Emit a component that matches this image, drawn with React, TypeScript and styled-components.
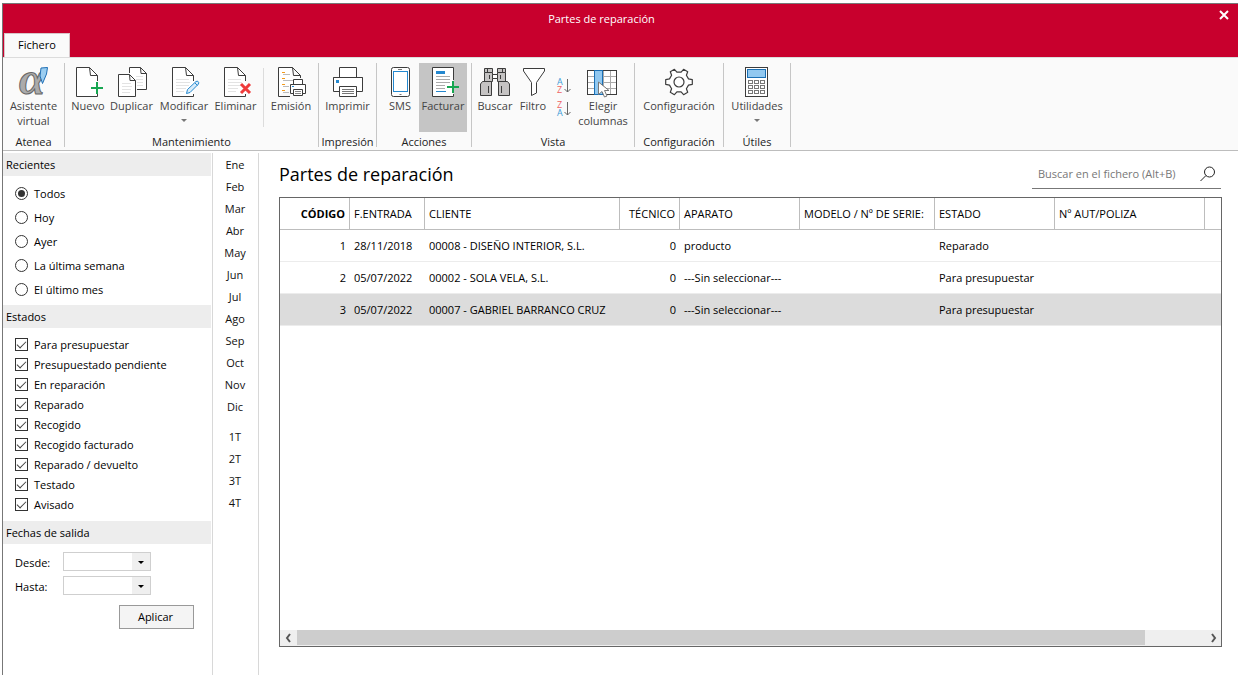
import React, { useState } from "react";
import styled, { createGlobalStyle } from "styled-components";

const GlobalStyle = createGlobalStyle`
  *, *::before, *::after { box-sizing: border-box; }
  body {
    margin: 0;
    background: #fff;
    color: #000;
    font: 11px/15px "Open Sans", "Noto Sans", sans-serif;
  }
  button, input, select { font: inherit; color: inherit; }
  svg { overflow: visible; }
`;

const Window = styled.div`
  display: flex;
  flex-direction: column;
  min-height: calc(100vh - 3px);
  margin: 3px 0 0 2px;
  border-left: 1px solid #777;
`;

const TitleBar = styled.header`
  position: relative;
  display: flex;
  flex-direction: column;
  height: 54px;
  border-top: 1px solid #777;
  background: #c8002d;
`;

const WindowTitle = styled.div`
  padding: 7px 38px 7px 0;
  text-align: center;
  color: #fff;
`;

const CloseButton = styled.button`
  position: absolute;
  top: 1px;
  right: 4px;
  display: flex;
  align-items: center;
  justify-content: center;
  width: 20px;
  height: 20px;
  padding: 0;
  border: 0;
  background: none;
`;

const Tab = styled.button`
  width: 66px;
  height: 25px;
  margin-left: 1px;
  margin-top: auto;
  padding: 0 0 2px;
  border: 1px solid #d8c4c8;
  border-bottom: 0;
  background: #fafafa;
`;

const Ribbon = styled.nav`
  display: flex;
  height: 94px;
  padding: 5px 0 3px;
  border-top: 1px solid #dcdcdc;
  border-bottom: 1px solid #bdbdbd;
  background: #fafafa;
`;

const Group = styled.section`
  display: flex;
  flex-direction: column;
  justify-content: space-between;
  padding: 0 4px;
  border-right: 1px solid #c6c6c6;
`;

const GroupRow = styled.div`
  display: flex;
  height: 69px;
`;

const GroupLabel = styled.div`
  display: flex;
  justify-content: center;
  width: 0;
  min-width: 100%;
  height: 13px;
  white-space: nowrap;
  color: #222;
`;

const Divider = styled.div`
  width: 1px;
  margin: 5px 4px;
  background: #dcdcdc;
`;

const RibbonButton = styled.button<{ $width: number; $active?: boolean }>`
  display: flex;
  flex-direction: column;
  align-items: center;
  width: ${(p) => p.$width}px;
  padding: 3px 0 0;
  border: 0;
  background: ${(p) => (p.$active ? "#c5c5c5" : "none")};
  color: #444;
  white-space: nowrap;
  svg { flex: none; }
`;

const Caret = styled.span`
  margin-top: 6px;
  border: 3px solid transparent;
  border-top-color: #777;
  border-bottom: 0;
`;

const SortStack = styled.div`
  display: flex;
  flex-direction: column;
  gap: 7px;
  width: 24px;
  padding-top: 15px;
`;

const SortButton = styled.button`
  display: flex;
  justify-content: center;
  padding: 0;
  border: 0;
  background: none;
`;

const Body = styled.div`
  display: flex;
  flex: 1;
  padding-top: 2px;
`;

const Sidebar = styled.aside`
  width: 210px;
  flex: none;
  padding-right: 1px;
  border-right: 1px solid #d8d8d8;
`;

const PanelTitle = styled.h2`
  margin: 0;
  padding: 4px 3px;
  background: #ededed;
  font-size: 11px;
  font-weight: 400;
  line-height: 15px;
`;

const OptionList = styled.div<{ $row: number; $top: number; $bottom: number }>`
  display: grid;
  grid-auto-rows: ${(p) => p.$row}px;
  padding: ${(p) => p.$top}px 12px ${(p) => p.$bottom}px;
  label {
    display: flex;
    align-items: center;
    gap: 6px;
  }
`;

const Radio = styled.input`
  appearance: none;
  display: grid;
  place-items: center;
  width: 13px;
  height: 13px;
  margin: 0;
  border: 1px solid #333;
  border-radius: 50%;
  &:checked::after {
    content: "";
    width: 7px;
    height: 7px;
    border-radius: 50%;
    background: #333;
  }
`;

const Check = styled.input`
  appearance: none;
  display: flex;
  justify-content: center;
  width: 13px;
  height: 13px;
  margin: 0;
  border: 1px solid #333;
  &:checked::after {
    content: "";
    width: 9px;
    height: 5px;
    margin-top: 2px;
    border: solid #444;
    border-width: 0 0 1px 1px;
    transform: rotate(-45deg);
  }
`;

const DateForm = styled.form`
  display: grid;
  grid-template-columns: 48px 88px;
  row-gap: 4px;
  padding: 8px 12px;
  label { padding-top: 3px; }
`;

const SelectBox = styled.div`
  position: relative;
  height: 20px;
  &::after {
    content: "";
    position: absolute;
    right: 7px;
    top: 9px;
    border: 3px solid transparent;
    border-top-color: #000;
    border-bottom: 0;
    pointer-events: none;
  }
`;

const Select = styled.select`
  appearance: none;
  width: 100%;
  height: 19px;
  padding: 0 20px 0 4px;
  border: 1px solid #cfcfcf;
  border-radius: 0;
  background: linear-gradient(to right, #fff calc(100% - 18px), #efefef calc(100% - 18px));
`;

const ApplyButton = styled.button`
  grid-column: 1 / -1;
  width: 75px;
  height: 24px;
  margin: 5px 0 0 104px;
  padding: 0 2px 2px 0;
  border: 1px solid #999;
  background: #f4f4f4;
`;

const Periods = styled.nav`
  display: flex;
  flex-direction: column;
  flex: none;
  width: 46px;
  border-right: 1px solid #d8d8d8;
`;

const Period = styled.button<{ $first?: boolean }>`
  height: 22px;
  margin-top: ${(p) => (p.$first ? 8 : 0)}px;
  padding: 0 1px 0 0;
  border: 0;
  background: none;
  color: #111;
`;

const Main = styled.main`
  display: flex;
  flex-direction: column;
  flex: 1;
  min-width: 0;
  padding: 6px 16px 28px 20px;
`;

const MainHeader = styled.div`
  display: flex;
  justify-content: space-between;
  align-items: flex-start;
  height: 38px;
`;

const Heading = styled.h1`
  margin: 0;
  font-size: 18px;
  font-weight: 400;
  line-height: 30px;
`;

const Search = styled.div`
  display: flex;
  width: 189px;
  height: 30px;
  margin-right: 1px;
  border-bottom: 1px solid #777;
  input {
    flex: 1;
    min-width: 0;
    padding: 0 6px;
    border: 0;
    outline: 0;
    background: none;
  }
  input::placeholder { color: #777; opacity: 1; }
  button {
    display: flex;
    align-items: center;
    padding: 0 5px;
    border: 0;
    background: none;
  }
`;

const TableFrame = styled.div`
  display: flex;
  flex-direction: column;
  flex: 1;
  border: 1px solid #666;
`;

const Table = styled.table`
  width: 100%;
  table-layout: fixed;
  border-spacing: 0;
  th, td {
    height: 32px;
    padding: 0 4px;
    overflow: hidden;
    text-align: left;
    font-weight: 400;
    white-space: nowrap;
    border-bottom: 1px solid #ececec;
  }
  thead th, thead td {
    border-bottom-color: #bdbdbd;
  }
  thead th { border-right: 1px solid #bdbdbd; }
`;

const HeadCell = styled.th<{ $width: number; $right?: boolean; $bold?: boolean }>`
  width: ${(p) => p.$width}px;
  && {
    text-align: ${(p) => (p.$right ? "right" : "left")};
    font-weight: ${(p) => (p.$bold ? 700 : 400)};
  }
`;

const Row = styled.tr<{ $selected: boolean }>`
  background: ${(p) => (p.$selected ? "#dcdcdc" : "#fff")};
`;

const Cell = styled.td<{ $right?: boolean }>`
  && { text-align: ${(p) => (p.$right ? "right" : "left")}; }
`;

const ScrollBar = styled.div`
  display: flex;
  height: 16px;
  margin-top: auto;
  background: #efefef;
  button {
    display: flex;
    align-items: center;
    justify-content: center;
    width: 17px;
    padding: 0;
    border: 0;
    background: none;
  }
`;

const Track = styled.div`
  flex: 1;
`;

const Thumb = styled.div`
  width: 93.5%;
  height: 15px;
  background: #cdcdcd;
`;

const INK = "#3c3c3c";
const GREEN = "#17a651";
const BLUE = "#2488cf";

type IconProps = { children: React.ReactNode };

const Icon = ({ children }: IconProps) => (
  <svg width="32" height="32" viewBox="0 0 32 32" fill="none" stroke={INK} aria-hidden="true">
    {children}
  </svg>
);

/* Sheet with a folded corner, open on the right where a mark sits over it */
const Sheet = ({ lines }: { lines?: boolean }) => (
  <>
    <path d="M25.5 14V9.5L17.5 1.5H4.5V30.5H25.5V28" fill="#fff" stroke="none" />
    <path d="M25.5 15V9.5L17.5 1.5H4.5V30.5H25.5V28M17.5 1.5L18.5 9.5H25.5" />
    {lines && <path d="M8 13.5H21M8 16.5H22M8 19.5H21M8 22.5H18M8 25.5H16" stroke="#e3e3e3" />}
  </>
);

const AssistantIcon = () => (
  <Icon>
    <text x="1" y="28" fontFamily="Liberation Serif, serif" fontSize="47" fontWeight="700" fontStyle="italic" fill="#ababab" stroke="#666" strokeWidth="1">
      α
    </text>
    <path d="M23 2L29.5 1.5L28.5 8L24.5 17.5L22 10Z" fill="#9bcdf0" stroke="#1f6fb5" />
  </Icon>
);

const NewIcon = () => (
  <Icon>
    <Sheet />
    <path d="M19 22H31M25 16V28" stroke={GREEN} strokeWidth="2" />
  </Icon>
);

const CopyIcon = () => (
  <Icon>
    <path d="M13.5 7V1.5H24.5L30.5 7.5V23.5H21M24.5 1.5L25 7.5H30.5" fill="#fff" />
    <path d="M20 10.5H27M20 13.5H27M21 16.5H27M21 19.5H27" stroke="#e3e3e3" />
    <path d="M2.5 8.5H13.5L19.5 14.5V30.5H2.5ZM13.5 8.5L14 14.5H19.5" fill="#fff" />
    <path d="M6 17.5H15M6 20.5H16M6 23.5H15M6 26.5H14" stroke="#e3e3e3" />
  </Icon>
);

const EditIcon = () => (
  <Icon>
    <Sheet lines />
    <path d="M18.5 27.5L19.5 23.5L28 15.5C29.5 14.5 31.5 16 30.5 18L22 26.5Z" fill="#d8ecfa" stroke={BLUE} />
    <path d="M27 17L29.5 19.5" stroke={BLUE} />
  </Icon>
);

const DeleteIcon = () => (
  <Icon>
    <Sheet lines />
    <path d="M21 18L30 27M30 18L21 27" stroke="#ef3b3b" strokeWidth="3" />
  </Icon>
);

const IssueIcon = () => (
  <Icon>
    <path d="M3.5 30.5V1.5H17.5L25.5 9.5V12M17.5 1.5L18.5 9.5H25.5M3.5 30.5H15" fill="#fff" />
    <path d="M7 6.5H10M7 12.5H10M7 18.5H10M7 24.5H10" stroke="#f39a1d" />
    <path d="M8 8.5H15M8 14.5H18M8 20.5H14M8 26.5H14" stroke="#bbb" />
    <path d="M18.5 18V13.5H27.5V18M18.5 27.5H15.5V18.5H30.5V27.5H27.5" fill="#fff" />
    <path d="M18.5 23.5H27.5V29.5H18.5Z" fill="#fff" />
    <path d="M20 25.5H26M20 27.5H26" stroke="#888" />
    <path d="M17 20.5H19" stroke={BLUE} />
  </Icon>
);

const PrintIcon = () => (
  <Icon>
    <path d="M7.5 11.5V1.5H24.5V11.5" fill="#fff" />
    <path d="M7.5 25.5H1.5V11.5H30.5V25.5H24.5" fill="#fff" />
    <path d="M7.5 20.5H24.5V30.5H7.5Z" fill="#fff" />
    <path d="M10 23.5H22M10 25.5H22M10 27.5H22" stroke="#777" />
    <path d="M4 15.5H7" stroke={BLUE} strokeWidth="3" />
    <path d="M1.5 11.5H30.5" />
  </Icon>
);

const PhoneIcon = () => (
  <Icon>
    <rect x="7.5" y="1.5" width="18" height="29" rx="2" fill="#fff" />
    <rect x="9.5" y="5.5" width="14" height="20" stroke={BLUE} />
    <path d="M14 3.5H18M15.5 28.5H17.5" stroke="#777" />
  </Icon>
);

const InvoiceIcon = () => (
  <Icon>
    <path d="M26.5 14V1.5H5.5V30.5H26.5V28" fill="#fff" />
    <path d="M9 6.5H18" stroke={BLUE} strokeWidth="3" />
    <path d="M9 10.5H23M9 13.5H23M9 16.5H23M9 19.5H18M9 22.5H18" stroke="#aaa" />
    <path d="M9 25.5H19" stroke={BLUE} />
    <path d="M20 21H32M26 15V27" stroke={GREEN} strokeWidth="2" />
  </Icon>
);

const BinocularsIcon = () => (
  <Icon>
    <g fill="#c5c3c3">
      <path d="M5.5 6.5V2.5H13.5V6.5M18.5 6.5V2.5H26.5V6.5" />
      <path d="M5.5 6.5H13.5V15.5H5.5ZM18.5 6.5H26.5V15.5H18.5Z" />
      <path d="M13.5 8.5H18.5V12.5H13.5Z" fill="#fff" />
      <path d="M1.5 29.5V18L3.5 15.5H12.5V29.5ZM19.5 29.5V15.5H28.5L30.5 18V29.5Z" />
      <path d="M10.5 9V13M21.5 9V13M9.5 20V27M22.5 20V27M8.5 2.5V6.5M23.5 2.5V6.5" />
    </g>
  </Icon>
);

const FilterIcon = () => (
  <Icon>
    <path d="M6.5 2.5H27.5V5L19.5 16.5V27L14.5 29.5V16.5L6.5 5Z" fill="#fff" />
  </Icon>
);

const ColumnsIcon = () => (
  <Icon>
    <rect x="0.5" y="4.5" width="29" height="24" fill="#fff" />
    <path d="M16.5 5V28M23.5 5V28M1 10.5H29M1 16.5H29M1 22.5H29" stroke="#aaa" />
    <rect x="0.5" y="4.5" width="29" height="24" />
    <rect x="7.5" y="4.5" width="8" height="24" fill="#91c8f0" stroke="#1a6fb4" />
    <path d="M11.5 16V28.5L15 25.5L17.5 31L20 30L17.5 24.5H22Z" fill="#fff" stroke="#777" />
  </Icon>
);

const gearOutline = Array.from({ length: 6 }, (_, i) => {
  const at = (deg: number, r: number) => {
    const a = ((i * 60 + deg) * Math.PI) / 180;
    return `${(16 + r * Math.cos(a)).toFixed(1)} ${(16 + r * Math.sin(a)).toFixed(1)}`;
  };
  return [at(-18, 10), at(-10, 13.5), at(10, 13.5), at(18, 10)].join("L");
}).join("L");

const GearIcon = () => (
  <Icon>
    <path d={`M${gearOutline}Z`} fill="#fff" strokeWidth="1.2" strokeLinejoin="round" />
    <circle cx="16" cy="16" r="5" fill="#fff" strokeWidth="1.2" />
  </Icon>
);

const CalculatorIcon = () => (
  <Icon>
    <rect x="4.5" y="1.5" width="22" height="29" fill="#fff" />
    <rect x="6.5" y="3.5" width="18" height="8" fill="#91c8f0" stroke="#1a6fb4" />
    {[14.5, 19.5, 24.5].map((y) =>
      [7.5, 13.5, 19.5].map((x) => <rect key={`${x}-${y}`} x={x} y={y} width="4" height="3" stroke="#777" />)
    )}
  </Icon>
);

const SortIcon = ({ top, bottom }: { top: string; bottom: string }) => {
  const tone = (c: string) => (c === "A" ? "#3d9bd8" : "#ee6363");
  return (
    <svg width="16" height="16" viewBox="0 0 16 16" aria-hidden="true">
      <g fontFamily="Open Sans, sans-serif" fontSize="9">
        <text x="1" y="7" fill={tone(top)}>{top}</text>
        <text x="1" y="15" fill={tone(bottom)}>{bottom}</text>
      </g>
      <path d="M11.5 1V14M8.5 11L11.5 14L14.5 11" fill="none" stroke="#666" />
    </svg>
  );
};

const months = ["Ene", "Feb", "Mar", "Abr", "May", "Jun", "Jul", "Ago", "Sep", "Oct", "Nov", "Dic"];
const quarters = ["1T", "2T", "3T", "4T"];
const recents = ["Todos", "Hoy", "Ayer", "La última semana", "El último mes"];
const states = [
  "Para presupuestar",
  "Presupuestado pendiente",
  "En reparación",
  "Reparado",
  "Recogido",
  "Recogido facturado",
  "Reparado / devuelto",
  "Testado",
  "Avisado",
];

const columns = [
  { name: "CÓDIGO", width: 70, right: true, bold: true },
  { name: "F.ENTRADA", width: 75 },
  { name: "CLIENTE", width: 195 },
  { name: "TÉCNICO", width: 60, right: true },
  { name: "APARATO", width: 120 },
  { name: "MODELO / Nº DE SERIE:", width: 135 },
  { name: "ESTADO", width: 120 },
  { name: "Nº AUT/POLIZA", width: 150 },
];

const rows = [
  ["1", "28/11/2018", "00008 - DISEÑO INTERIOR, S.L.", "0", "producto", "", "Reparado", ""],
  ["2", "05/07/2022", "00002 - SOLA VELA, S.L.", "0", "---Sin seleccionar---", "", "Para presupuestar", ""],
  ["3", "05/07/2022", "00007 - GABRIEL BARRANCO CRUZ", "0", "---Sin seleccionar---", "", "Para presupuestar", ""],
];

export default function App() {
  const [recent, setRecent] = useState("Todos");
  const [selected, setSelected] = useState(2);

  return (
    <>
      <GlobalStyle />
      <Window>
        <TitleBar>
          <WindowTitle>Partes de reparación</WindowTitle>
          <CloseButton aria-label="Cerrar">
            <svg width="10" height="10" viewBox="0 0 10 10" aria-hidden="true">
              <path d="M1 1L9 9M9 1L1 9" stroke="#fff" strokeWidth="2" />
            </svg>
          </CloseButton>
          <Tab>Fichero</Tab>
        </TitleBar>

        <Ribbon>
          <Group>
            <GroupRow>
              <RibbonButton $width={53}><AssistantIcon />Asistente<span>virtual</span></RibbonButton>
            </GroupRow>
            <GroupLabel>Atenea</GroupLabel>
          </Group>
          <Group>
            <GroupRow>
              <RibbonButton $width={38}><NewIcon />Nuevo</RibbonButton>
              <RibbonButton $width={49}><CopyIcon />Duplicar</RibbonButton>
              <RibbonButton $width={56}><EditIcon />Modificar<Caret /></RibbonButton>
              <RibbonButton $width={47}><DeleteIcon />Eliminar</RibbonButton>
              <Divider />
              <RibbonButton $width={46}><IssueIcon />Emisión</RibbonButton>
            </GroupRow>
            <GroupLabel>Mantenimiento</GroupLabel>
          </Group>
          <Group>
            <GroupRow>
              <RibbonButton $width={49}><PrintIcon />Imprimir</RibbonButton>
            </GroupRow>
            <GroupLabel>Impresión</GroupLabel>
          </Group>
          <Group>
            <GroupRow>
              <RibbonButton $width={38}><PhoneIcon />SMS</RibbonButton>
              <RibbonButton $width={48} $active><InvoiceIcon />Facturar</RibbonButton>
            </GroupRow>
            <GroupLabel>Acciones</GroupLabel>
          </Group>
          <Group>
            <GroupRow>
              <RibbonButton $width={38}><BinocularsIcon />Buscar</RibbonButton>
              <RibbonButton $width={38}><FilterIcon />Filtro</RibbonButton>
              <SortStack>
                <SortButton aria-label="Orden ascendente"><SortIcon top="A" bottom="Z" /></SortButton>
                <SortButton aria-label="Orden descendente"><SortIcon top="Z" bottom="A" /></SortButton>
              </SortStack>
              <RibbonButton $width={54}><ColumnsIcon />Elegir<span>columnas</span></RibbonButton>
            </GroupRow>
            <GroupLabel>Vista</GroupLabel>
          </Group>
          <Group>
            <GroupRow>
              <RibbonButton $width={80}><GearIcon />Configuración</RibbonButton>
            </GroupRow>
            <GroupLabel>Configuración</GroupLabel>
          </Group>
          <Group>
            <GroupRow>
              <RibbonButton $width={58}><CalculatorIcon />Utilidades<Caret /></RibbonButton>
            </GroupRow>
            <GroupLabel>Útiles</GroupLabel>
          </Group>
        </Ribbon>

        <Body>
          <Sidebar>
            <PanelTitle>Recientes</PanelTitle>
            <OptionList $row={24} $top={5} $bottom={4}>
              {recents.map((name) => (
                <label key={name}>
                  <Radio type="radio" name="recent" checked={recent === name} onChange={() => setRecent(name)} />
                  {name}
                </label>
              ))}
            </OptionList>
            <PanelTitle>Estados</PanelTitle>
            <OptionList $row={20} $top={6} $bottom={7}>
              {states.map((name) => (
                <label key={name}>
                  <Check type="checkbox" defaultChecked />
                  {name}
                </label>
              ))}
            </OptionList>
            <PanelTitle>Fechas de salida</PanelTitle>
            <DateForm onSubmit={(e) => e.preventDefault()}>
              <label htmlFor="from">Desde:</label>
              <SelectBox><Select id="from" /></SelectBox>
              <label htmlFor="to">Hasta:</label>
              <SelectBox><Select id="to" /></SelectBox>
              <ApplyButton type="submit">Aplicar</ApplyButton>
            </DateForm>
          </Sidebar>

          <Periods>
            {months.map((m) => <Period key={m}>{m}</Period>)}
            {quarters.map((q, i) => <Period key={q} $first={i === 0}>{q}</Period>)}
          </Periods>

          <Main>
            <MainHeader>
              <Heading>Partes de reparación</Heading>
              <Search>
                <input type="text" placeholder="Buscar en el fichero (Alt+B)" aria-label="Buscar en el fichero" />
                <button aria-label="Buscar">
                  <svg width="16" height="16" viewBox="0 0 16 16" fill="none" stroke="#222" aria-hidden="true">
                    <circle cx="9.5" cy="6" r="5" />
                    <path d="M6 9.5L0.5 15" />
                  </svg>
                </button>
              </Search>
            </MainHeader>
            <TableFrame>
              <Table>
                <thead>
                  <tr>
                    {columns.map((c) => (
                      <HeadCell key={c.name} scope="col" $width={c.width} $right={c.right} $bold={c.bold}>{c.name}</HeadCell>
                    ))}
                    <td />
                  </tr>
                </thead>
                <tbody>
                  {rows.map((row, r) => (
                    <Row key={row[0]} $selected={r === selected} onClick={() => setSelected(r)}>
                      {row.map((value, c) => (
                        <Cell key={columns[c].name} $right={columns[c].right}>{value}</Cell>
                      ))}
                      <td />
                    </Row>
                  ))}
                </tbody>
              </Table>
              <ScrollBar>
                <button aria-label="Desplazar a la izquierda">
                  <svg width="8" height="8" viewBox="0 0 8 8" fill="none" stroke="#555" strokeWidth="2" aria-hidden="true">
                    <path d="M5 0L2 4L5 8" />
                  </svg>
                </button>
                <Track><Thumb /></Track>
                <button aria-label="Desplazar a la derecha">
                  <svg width="8" height="8" viewBox="0 0 8 8" fill="none" stroke="#555" strokeWidth="2" aria-hidden="true">
                    <path d="M3 0L6 4L3 8" />
                  </svg>
                </button>
              </ScrollBar>
            </TableFrame>
          </Main>
        </Body>
      </Window>
    </>
  );
}
